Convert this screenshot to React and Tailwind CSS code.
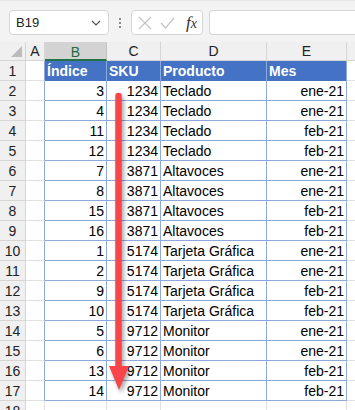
import React from 'react';

const ROWS = [
  [3, 1234, 'Teclado', 'ene-21'],
  [4, 1234, 'Teclado', 'ene-21'],
  [11, 1234, 'Teclado', 'feb-21'],
  [12, 1234, 'Teclado', 'feb-21'],
  [7, 3871, 'Altavoces', 'ene-21'],
  [8, 3871, 'Altavoces', 'ene-21'],
  [15, 3871, 'Altavoces', 'feb-21'],
  [16, 3871, 'Altavoces', 'feb-21'],
  [1, 5174, 'Tarjeta Gráfica', 'ene-21'],
  [2, 5174, 'Tarjeta Gráfica', 'ene-21'],
  [9, 5174, 'Tarjeta Gráfica', 'feb-21'],
  [10, 5174, 'Tarjeta Gráfica', 'feb-21'],
  [5, 9712, 'Monitor', 'ene-21'],
  [6, 9712, 'Monitor', 'ene-21'],
  [13, 9712, 'Monitor', 'feb-21'],
  [14, 9712, 'Monitor', 'feb-21'],
];

const GRID = 'grid grid-cols-[26px_19px_62px_54px_106px_80px_1fr]';

const RowHead = ({ children }) => (
  <div className="h-5 flex items-center justify-center bg-[#f0f0f0] border-r border-b border-[#d5d5d5] text-[#222]">
    {children}
  </div>
);

const App = () => {
  return (
    <div
      className="relative w-[355px] h-[410px] overflow-hidden bg-white text-[14px] leading-none"
      style={{ fontFamily: '"Liberation Sans", Arial, sans-serif' }}
    >
      {/* barra de fórmulas */}
      <div className="h-[42px] bg-[#f3f3f3] border-t border-[#e6e6e6] flex items-start pt-[9px] pl-[9px]">
        <div className="w-[100px] h-[25px] bg-white border border-[#d6d6d6] rounded-[4px] flex items-center justify-between pl-[6px] pr-[7px] text-[13px] text-[#222]">
          <span>B19</span>
          <svg width="10" height="6" viewBox="0 0 10 6" fill="none" stroke="#555" strokeWidth="1.2">
            <path d="M1 1l4 4 4-4" />
          </svg>
        </div>
        <div className="w-[22px] h-[25px] flex flex-col items-center justify-center gap-[2px]">
          <span className="w-[2px] h-[2px] bg-[#8a8a8a]" />
          <span className="w-[2px] h-[2px] bg-[#8a8a8a]" />
          <span className="w-[2px] h-[2px] bg-[#8a8a8a]" />
        </div>
        <div className="w-[72px] h-[25px] bg-white border border-[#d6d6d6] rounded-[4px] flex items-center pl-[6px] gap-[8px]">
          <svg width="14" height="14" viewBox="0 0 14 14" stroke="#c4c4c4" strokeWidth="1.2">
            <path d="M1 1l12 12M13 1L1 13" />
          </svg>
          <svg width="15" height="12" viewBox="0 0 15 12" fill="none" stroke="#c4c4c4" strokeWidth="1.2">
            <path d="M1 6l4.5 5L14 1" />
          </svg>
          <span
            className="italic text-[17px] text-[#333] ml-[3px]"
            style={{ fontFamily: '"Liberation Serif", "Times New Roman", serif' }}
          >
            f<span className="text-[14px]">x</span>
          </span>
        </div>
        <div className="ml-[6px] flex-1 h-[25px] bg-white border border-[#d6d6d6] rounded-l-[4px] border-r-0" />
      </div>

      {/* encabezados de columna */}
      <div className={`${GRID} h-[19px]`}>
        <div className="bg-[#f0f0f0] border-r border-b border-[#d5d5d5] relative">
          <svg className="absolute right-[3px] bottom-[3px]" width="11" height="11" viewBox="0 0 11 11">
            <path d="M11 0v11H0z" fill="#bcbcbc" />
          </svg>
        </div>
        <div className="bg-[#f0f0f0] border-r border-b border-[#d5d5d5] flex items-center justify-center text-[#222]">A</div>
        <div className="bg-[#d3d3d3] border-r border-[#c4c4c4] border-b-2 border-b-[#217346] flex items-center justify-center text-[#1e6b3e] pt-[2px]">B</div>
        <div className="bg-[#f0f0f0] border-r border-b border-[#d5d5d5] flex items-center justify-center text-[#222]">C</div>
        <div className="bg-[#f0f0f0] border-r border-b border-[#d5d5d5] flex items-center justify-center text-[#222]">D</div>
        <div className="bg-[#f0f0f0] border-r border-b border-[#d5d5d5] flex items-center justify-center text-[#222]">E</div>
        <div className="bg-[#f0f0f0] border-b border-[#d5d5d5]" />
      </div>

      {/* fila 1: encabezado de la tabla */}
      <div className={GRID}>
        <RowHead>1</RowHead>
        <div className="border-r border-[#8ea9db] border-b border-b-[#e1e1e1]" />
        <div className="h-5 bg-[#4472c4] text-white font-bold flex items-center pl-[2px] border-r border-[#8ea9db]">Índice</div>
        <div className="h-5 bg-[#4472c4] text-white font-bold flex items-center pl-[2px] border-r border-[#8ea9db]">SKU</div>
        <div className="h-5 bg-[#4472c4] text-white font-bold flex items-center pl-[2px] border-r border-[#8ea9db]">Producto</div>
        <div className="h-5 bg-[#4472c4] text-white font-bold flex items-center pl-[2px] border-r border-[#8ea9db]">Mes</div>
        <div className="border-b border-[#e1e1e1]" />
      </div>

      {/* filas de datos */}
      {ROWS.map((r, i) => (
        <div key={i} className={GRID}>
          <RowHead>{i + 2}</RowHead>
          <div className="border-r border-[#8ea9db] border-b border-b-[#e1e1e1]" />
          <div className="h-5 flex items-center justify-end pr-[2px] border-r border-b border-[#8ea9db]">{r[0]}</div>
          <div className="h-5 flex items-center justify-end pr-[2px] border-r border-b border-[#8ea9db]">{r[1]}</div>
          <div className="h-5 flex items-center pl-[2px] border-r border-b border-[#8ea9db] whitespace-nowrap">{r[2]}</div>
          <div className="h-5 flex items-center justify-end pr-[2px] border-r border-b border-[#8ea9db]">{r[3]}</div>
          <div className="border-b border-[#e1e1e1]" />
        </div>
      ))}

      {/* fila 18 */}
      <div className={GRID}>
        <RowHead>18</RowHead>
        <div className="h-5 border-r border-[#e1e1e1]" />
        <div className="h-5 border-r border-[#e1e1e1]" />
        <div className="h-5 border-r border-[#e1e1e1]" />
        <div className="h-5 border-r border-[#e1e1e1]" />
        <div className="h-5 border-r border-[#e1e1e1]" />
        <div />
      </div>

      {/* flecha roja */}
      <svg
        className="absolute left-[104px] top-[88px]"
        width="34"
        height="310"
        viewBox="0 0 34 310"
        style={{ filter: 'drop-shadow(2px 3px 2px rgba(0,0,0,0.35))' }}
      >
        <path d="M14.5 8V282" stroke="#f94449" strokeWidth="6.5" strokeLinecap="round" />
        <path d="M5 278H25L15 302z" fill="#f94449" />
      </svg>
    </div>
  );
};

export default App;
